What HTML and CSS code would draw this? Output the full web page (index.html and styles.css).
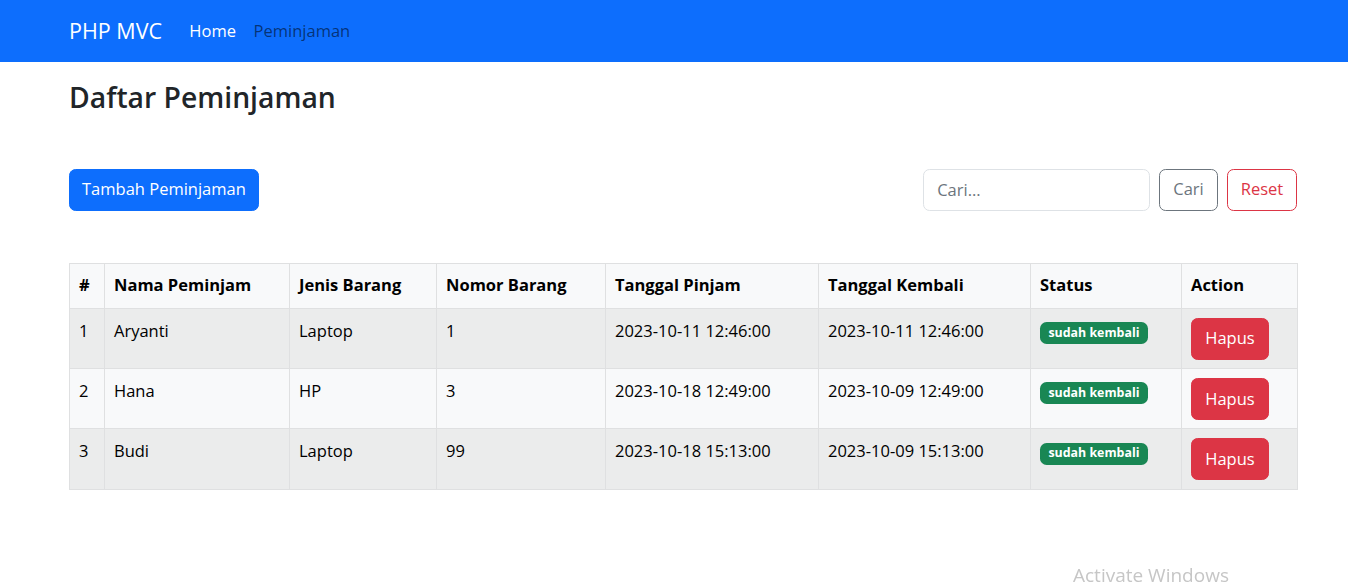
FILE: index.html
```html
<!DOCTYPE html>
<html lang="id">
<head>
<meta charset="utf-8">
<title>PHP MVC - Daftar Peminjaman</title>
<link rel="stylesheet" href="styles.css">
</head>
<body>
<nav class="navbar">
  <div class="container nav-inner">
    <a class="brand" href="#">PHP MVC</a>
    <ul class="nav-links">
      <li><a class="nav-link active" href="#">Home</a></li>
      <li><a class="nav-link" href="#">Peminjaman</a></li>
    </ul>
  </div>
</nav>

<main class="container">
  <h2 class="page-title">Daftar Peminjaman</h2>

  <div class="toolbar">
    <a class="btn btn-primary" href="#">Tambah Peminjaman</a>
    <form class="search-form">
      <input class="form-control" type="text" placeholder="Cari...">
      <button class="btn btn-outline-secondary" type="button">Cari</button>
      <button class="btn btn-outline-danger" type="button">Reset</button>
    </form>
  </div>

  <table class="data-table">
    <colgroup>
      <col class="c-no"><col class="c-nama"><col class="c-jenis"><col class="c-nomor">
      <col class="c-pinjam"><col class="c-kembali"><col class="c-status"><col class="c-action">
    </colgroup>
    <thead>
      <tr>
        <th>#</th><th>Nama Peminjam</th><th>Jenis Barang</th><th>Nomor Barang</th>
        <th>Tanggal Pinjam</th><th>Tanggal Kembali</th><th>Status</th><th>Action</th>
      </tr>
    </thead>
    <tbody>
      <tr>
        <td>1</td><td>Aryanti</td><td>Laptop</td><td>1</td>
        <td>2023-10-11 12:46:00</td><td>2023-10-11 12:46:00</td>
        <td><span class="badge">sudah kembali</span></td>
        <td><a class="btn btn-danger" href="#">Hapus</a></td>
      </tr>
      <tr>
        <td>2</td><td>Hana</td><td>HP</td><td>3</td>
        <td>2023-10-18 12:49:00</td><td>2023-10-09 12:49:00</td>
        <td><span class="badge">sudah kembali</span></td>
        <td><a class="btn btn-danger" href="#">Hapus</a></td>
      </tr>
      <tr>
        <td>3</td><td>Budi</td><td>Laptop</td><td>99</td>
        <td>2023-10-18 15:13:00</td><td>2023-10-09 15:13:00</td>
        <td><span class="badge">sudah kembali</span></td>
        <td><a class="btn btn-danger" href="#">Hapus</a></td>
      </tr>
    </tbody>
  </table>
</main>

<div class="watermark">Activate Windows</div>
</body>
</html>
```

FILE: styles.css
```css
* { box-sizing: border-box; }

html, body {
  margin: 0;
  padding: 0;
}

body {
  font-family: "Open Sans", "Noto Sans", "Liberation Sans", sans-serif;
  font-size: 16.5px;
  line-height: 1.5;
  color: #212529;
  background: #fff;
}

a { text-decoration: none; }

.container {
  width: 1228px;
  margin-left: 69px;
}

/* Navbar */
.navbar {
  background: #0d6efd;
  padding: 8.8px 0;
}

.nav-inner {
  display: flex;
  align-items: center;
}

.brand {
  color: #fff;
  font-size: 21.5px;
  line-height: 33px;
  padding: 5.5px 0;
  margin-right: 18.5px;
}

.nav-links {
  display: flex;
  list-style: none;
  margin: 0;
  padding: 0;
}

.nav-link {
  display: block;
  padding: 8.8px;
  line-height: 26.4px;
  color: rgba(0, 0, 0, 0.55);
}

.nav-link.active { color: #fff; }

/* Title */
.page-title {
  font-size: 28.3px;
  font-weight: 600;
  line-height: 1.2;
  margin: 19px 0 0;
  color: #212529;
}

/* Toolbar */
.toolbar {
  display: flex;
  justify-content: space-between;
  align-items: center;
  margin-top: 54px;
  margin-bottom: 52px;
}

.search-form {
  display: flex;
  gap: 9px;
  margin: 0;
}

.btn {
  display: inline-block;
  font-family: inherit;
  font-size: 16.5px;
  line-height: 26.8px;
  padding: 6.6px 12px;
  border: 1.1px solid transparent;
  border-radius: 6.6px;
  background: transparent;
  cursor: pointer;
  text-align: center;
  vertical-align: middle;
}

.btn-primary {
  background: #0d6efd;
  border-color: #0d6efd;
  color: #fff;
}

.btn-outline-secondary {
  border-color: #6c757d;
  color: #6c757d;
  width: 59px;
  padding-left: 0;
  padding-right: 0;
}

.btn-outline-danger {
  border-color: #dc3545;
  color: #dc3545;
  width: 70px;
  padding-left: 0;
  padding-right: 0;
}

.btn-danger {
  background: #dc3545;
  border-color: #dc3545;
  color: #fff;
  width: 78px;
  padding-left: 0;
  padding-right: 0;
}

.form-control {
  width: 227px;
  height: 42px;
  font-family: inherit;
  font-size: 16.5px;
  padding: 6.6px 13.2px;
  border: 1.1px solid #dee2e6;
  border-radius: 6.6px;
  color: #212529;
}

.form-control::placeholder { color: #6c757d; }

/* Table */
.data-table {
  width: 1228px;
  table-layout: fixed;
  border-collapse: collapse;
  vertical-align: top;
}

.c-no { width: 35px; }
.c-nama { width: 185px; }
.c-jenis { width: 147px; }
.c-nomor { width: 169px; }
.c-pinjam { width: 213px; }
.c-kembali { width: 212px; }
.c-status { width: 151px; }
.c-action { width: 116px; }

.data-table th,
.data-table td {
  border: 1px solid #dfe0e1;
  padding: 8.8px 9px;
  line-height: 26.4px;
  text-align: left;
  vertical-align: top;
  color: #000;
  white-space: nowrap;
}

.data-table td { padding-top: 9.2px; padding-bottom: 8.2px; }

.data-table th { font-weight: 700; }

.data-table thead tr { background: #f8f9fa; }
.data-table tbody tr:nth-child(odd) { background: #ebecec; }
.data-table tbody tr:nth-child(even) { background: #f8f9fa; }

.badge {
  display: inline-block;
  background: #198754;
  color: #fff;
  font-size: 12.4px;
  font-weight: 700;
  line-height: 1;
  padding: 4.8px 8.4px;
  border-radius: 6.6px;
  vertical-align: baseline;
}

.watermark {
  position: fixed;
  left: 1073px;
  top: 562px;
  font-size: 19px;
  color: #c6c6c6;
  line-height: 26px;
  pointer-events: none;
}
```
